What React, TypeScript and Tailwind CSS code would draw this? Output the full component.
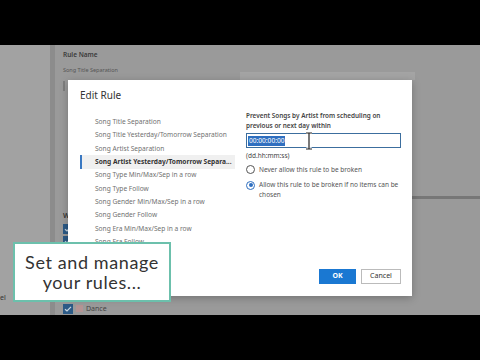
import React from "react";

const rules = [
  "Song Title Separation",
  "Song Title Yesterday/Tomorrow Separation",
  "Song Artist Separation",
  "Song Artist Yesterday/Tomorrow Separa...",
  "Song Type Min/Max/Sep in a row",
  "Song Type Follow",
  "Song Gender Min/Max/Sep in a row",
  "Song Gender Follow",
  "Song Era Min/Max/Sep in a row",
  "Song Era Follow",
];

function Check() {
  return (
    <span className="flex h-[10px] w-[10px] items-center justify-center bg-[#2c5a86]">
      <svg width="8" height="8" viewBox="0 0 8 8">
        <path d="M1 4.2 3 6 7 1.8" fill="none" stroke="#c9d6e2" strokeWidth="1.2" />
      </svg>
    </span>
  );
}

export default function App() {
  return (
    <div
      className="flex h-[360px] w-[480px] flex-col bg-black"
      style={{ fontFamily: '"Noto Sans", "Open Sans", sans-serif' }}
    >
      <div className="h-[45px]" />
      <div className="relative flex h-[270px] overflow-hidden bg-[#9a9a9a]">
        {/* dimmed app behind */}
        <div className="flex w-[50px] flex-col justify-end bg-[#a2a2a2] pb-[12px]">
          <span className="text-[7px] text-[#333]">el</span>
        </div>
        <div className="w-[5px] bg-[#8c8c8c]" />
        <div className="flex flex-1 flex-col pl-[8px] pt-[5px]">
          <span className="text-[6.5px] font-semibold text-[#3a3a3a]">Rule Name</span>
          <span className="mt-[6px] w-[56px] whitespace-nowrap text-[5.5px] text-[#555]">Song Title Separation</span>
          <div className="mt-[7px] h-[10px] w-[2px] bg-[#7e7e7e]" />
          <div className="mt-[120px] flex flex-col gap-[2px]">
            <span className="text-[7px] font-semibold text-[#333]">Wh</span>
            <Check />
            <Check />
          </div>
          <div className="mt-[58px] flex items-center gap-[3px]">
            <Check />
            <span className="h-[7px] w-[7px] bg-[#b49494]" />
            <span className="text-[7px] text-[#444]">Dance</span>
          </div>
        </div>
        <div className="absolute left-[412px] top-[151px] h-[3px] w-[68px] bg-[#777]" />
        <div className="absolute left-[240px] top-[27px] h-[8px] w-[175px] bg-[#a4a4a4]" />

        {/* dialog */}
        <div className="absolute left-[68px] top-[35px] flex h-[216px] w-[344px] flex-col bg-white shadow-[0_2px_8px_rgba(0,0,0,0.25)]">
          <div className="pl-[12px] pt-[8px] text-[10px] text-[#333]">Edit Rule</div>
          <div className="flex flex-1 pt-[12px]">
            <div className="flex w-[167px] flex-col pl-[12px]">
              {rules.map((r, i) =>
                i === 3 ? (
                  <div
                    key={r}
                    className="flex h-[13.4px] items-center whitespace-nowrap border-l-2 border-[#3a78c2] bg-[#f0f0f0] pl-[13px] text-[6.6px] font-bold text-[#333]"
                  >
                    {r}
                  </div>
                ) : (
                  <div key={r} className="flex h-[13.4px] items-center whitespace-nowrap pl-[15px] text-[6.6px] text-[#707070]">
                    {r}
                  </div>
                )
              )}
            </div>
            <div className="flex flex-1 flex-col pl-[11px]">
              <div className="-mt-[4px] text-[6.4px] font-semibold leading-[10px] text-[#444]">
                Prevent Songs by Artist from scheduling on
                <br />
                previous or next day within
              </div>
              <div className="relative mt-[2px] flex h-[15px] w-[155px] items-center border border-[#3c6e9e] px-[1px]">
                <span className="bg-[#2f6fc0] px-[1px] text-[6.6px] leading-[10px] text-white">00:00:00:00</span>
                <svg className="absolute left-[58px] top-[-2px]" width="8" height="18" viewBox="0 0 8 18">
                  <path d="M1 1h6M4 1v16M1 17h6" fill="none" stroke="#fff" strokeWidth="3" />
                  <path d="M1 1h6M4 1v16M1 17h6" fill="none" stroke="#222" strokeWidth="1.2" />
                </svg>
              </div>
              <div className="mt-[3px] text-[6.5px] text-[#444]">(dd.hh:mm:ss)</div>
              <div className="mt-[4px] flex items-center gap-[4px]">
                <span className="h-[9px] w-[9px] rounded-full border border-[#555]" />
                <span className="text-[6.5px] text-[#555]">Never allow this rule to be broken</span>
              </div>
              <div className="mt-[5px] flex items-start gap-[4px]">
                <span className="mt-[1px] flex h-[9px] w-[9px] shrink-0 items-center justify-center rounded-full border border-[#2f6fc0]">
                  <span className="h-[4px] w-[4px] rounded-full bg-[#2f6fc0]" />
                </span>
                <span className="text-[6.5px] leading-[10px] text-[#555]">
                  Allow this rule to be broken if no items can be
                  <br />
                  chosen
                </span>
              </div>
              <div className="flex-1" />
              <div className="mb-[12px] flex justify-end gap-[5px] pr-[11px]">
                <button className="h-[15px] w-[37px] bg-[#1a78d2] text-[7px] font-bold text-white">OK</button>
                <button className="h-[15px] w-[40px] border border-[#bbb] bg-white text-[7px] text-[#333]">Cancel</button>
              </div>
            </div>
          </div>
        </div>

        {/* caption card */}
        <div className="absolute left-[13px] top-[197px] flex h-[60px] w-[158px] flex-col items-center justify-center border-2 border-[#6cc0ac] bg-white">
          <span
            className="text-[18px] leading-[20px] tracking-[0.6px] text-[#333]"
            style={{ fontFamily: '"Lato", sans-serif' }}
          >
            Set and manage
          </span>
          <span
            className="text-[18px] leading-[20px] tracking-[0.6px] text-[#333]"
            style={{ fontFamily: '"Lato", sans-serif' }}
          >
            your rules...
          </span>
        </div>
      </div>
      <div className="flex-1" />
    </div>
  );
}
